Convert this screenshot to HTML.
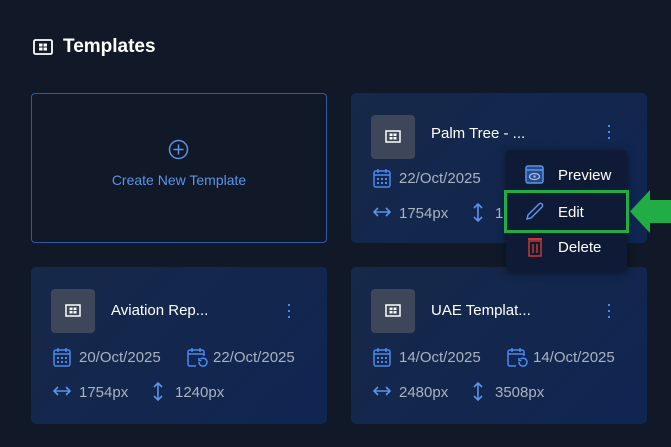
<!DOCTYPE html>
<html><head><style>
*{margin:0;padding:0;box-sizing:border-box}
body{width:671px;height:447px;background:#111827;font-family:"Liberation Sans",sans-serif;position:relative;overflow:hidden;color:#fff}
.abs{position:absolute}
.card{position:absolute;width:296px;border-radius:5px;background:linear-gradient(135deg,#172848,#0f2552)}
.thumb{position:absolute;left:20px;top:22px;width:44px;height:44px;border-radius:4px;background:#3e475a}
.title{position:absolute;left:80px;top:35px;font-size:15px;color:#fff}
.dots{position:absolute;left:257px;top:34px;width:4px}
.dots i{display:block;width:2px;height:2px;background:#4b8af0;margin:0 0 4px 0}
.t{position:absolute;font-size:15px;color:#aab2c0}
</style></head><body>
<svg class="abs" style="left:33px;top:39px" width="20" height="16" viewBox="0 0 20 16"><rect x="1" y="1" width="18" height="14" rx="1.5" fill="none" stroke="#fff" stroke-width="1.8"/><rect x="6" y="4.5" width="3.5" height="3" fill="#fff"/><rect x="10.5" y="4.5" width="3.5" height="3" fill="#fff"/><rect x="6" y="8.5" width="3.5" height="3" fill="#fff"/><rect x="10.5" y="8.5" width="3.5" height="3" fill="#fff"/></svg>
<div class="abs" style="left:63px;top:36px;font-size:19px;font-weight:bold">Templates</div>

<div class="abs" style="left:31px;top:93px;width:296px;height:150px;border:1px solid #2c5aa8;border-radius:4px"></div>
<svg class="abs" style="left:168px;top:139px" width="21" height="21"><circle cx="10.5" cy="10.5" r="9" fill="none" stroke="#5b93ea" stroke-width="1.5"/><path d="M10.5 5.5v10M5.5 10.5h10" stroke="#5b93ea" stroke-width="1.5"/></svg>
<div class="abs" style="left:31px;width:296px;top:172px;text-align:center;font-size:14px;color:#5b93ea">Create New Template</div>

<div class="card" style="left:351px;top:93px;height:150px">
 <div class="thumb"><svg style="margin:15px 0 0 14px" width="16" height="13"><rect x="1" y="1" width="14" height="11" fill="none" stroke="#fff" stroke-width="1.5"/><rect x="4.5" y="3.5" width="3" height="2.5" fill="#fff"/><rect x="8.5" y="3.5" width="3" height="2.5" fill="#fff"/><rect x="4.5" y="7" width="3" height="2.5" fill="#fff"/><rect x="8.5" y="7" width="3" height="2.5" fill="#fff"/></svg></div>
 <div class="title" style="top:32px">Palm Tree - ...</div>
 <div class="dots" style="top:32px"><i></i><i></i><i></i></div>
 <svg class="abs" style="left:22px;top:75px" width="18" height="20"><rect x="1" y="3" width="16" height="16" rx="2" fill="none" stroke="#4b8af0" stroke-width="1.5"/><path d="M1 7h16M5 1v4M13 1v4" stroke="#4b8af0" stroke-width="1.5"/><g fill="#4b8af0"><rect x="4" y="10" width="2" height="2"/><rect x="8" y="10" width="2" height="2"/><rect x="12" y="10" width="2" height="2"/><rect x="4" y="14" width="2" height="2"/><rect x="8" y="14" width="2" height="2"/><rect x="12" y="14" width="2" height="2"/></g></svg>
 <div class="t" style="left:48px;top:77px">22/Oct/2025</div>
 <svg class="abs" style="left:22px;top:114px" width="18" height="10"><path d="M1 5h16M5 1L1 5l4 4M13 1l4 4-4 4" fill="none" stroke="#5b93ea" stroke-width="1.6"/></svg>
 <svg class="abs" style="left:122px;top:110px" width="10" height="19"><path d="M5 1v17M1 5l4-4 4 4M1 14l4 4 4-4" fill="none" stroke="#5b93ea" stroke-width="1.6"/></svg>
 <div class="t" style="left:48px;top:112px">1754px</div>
 <div class="t" style="left:144px;top:112px">1</div>
</div>

<div class="card" style="left:31px;top:267px;height:157px">
 <div class="thumb"><svg style="margin:15px 0 0 14px" width="16" height="13"><rect x="1" y="1" width="14" height="11" fill="none" stroke="#fff" stroke-width="1.5"/><rect x="4.5" y="3.5" width="3" height="2.5" fill="#fff"/><rect x="8.5" y="3.5" width="3" height="2.5" fill="#fff"/><rect x="4.5" y="7" width="3" height="2.5" fill="#fff"/><rect x="8.5" y="7" width="3" height="2.5" fill="#fff"/></svg></div>
 <div class="title">Aviation Rep...</div>
 <div class="dots" style="top:37px"><i></i><i></i><i></i></div>
 <svg class="abs" style="left:22px;top:80px" width="18" height="20"><rect x="1" y="3" width="16" height="16" rx="2" fill="none" stroke="#4b8af0" stroke-width="1.5"/><path d="M1 7h16M5 1v4M13 1v4" stroke="#4b8af0" stroke-width="1.5"/><g fill="#4b8af0"><rect x="4" y="10" width="2" height="2"/><rect x="8" y="10" width="2" height="2"/><rect x="12" y="10" width="2" height="2"/><rect x="4" y="14" width="2" height="2"/><rect x="8" y="14" width="2" height="2"/><rect x="12" y="14" width="2" height="2"/></g></svg>
 <div class="t" style="left:48px;top:82px">20/Oct/2025</div>
 <svg class="abs" style="left:156px;top:80px" width="22" height="22"><path d="M9 19H3a2 2 0 0 1-2-2V5a2 2 0 0 1 2-2h12a2 2 0 0 1 2 2v4M1 7h16M5 1v4M13 1v4" fill="none" stroke="#4b8af0" stroke-width="1.5"/><path d="M12 15a4 4 0 1 0 1.5-3M12 11v2.5h2.5" fill="none" stroke="#4b8af0" stroke-width="1.5"/></svg>
 <div class="t" style="left:182px;top:82px">22/Oct/2025</div>
 <svg class="abs" style="left:22px;top:119px" width="18" height="10"><path d="M1 5h16M5 1L1 5l4 4M13 1l4 4-4 4" fill="none" stroke="#5b93ea" stroke-width="1.6"/></svg>
 <svg class="abs" style="left:122px;top:115px" width="10" height="19"><path d="M5 1v17M1 5l4-4 4 4M1 14l4 4 4-4" fill="none" stroke="#5b93ea" stroke-width="1.6"/></svg>
 <div class="t" style="left:48px;top:117px">1754px</div>
 <div class="t" style="left:144px;top:117px">1240px</div>
</div>

<div class="card" style="left:351px;top:267px;height:157px">
 <div class="thumb"><svg style="margin:15px 0 0 14px" width="16" height="13"><rect x="1" y="1" width="14" height="11" fill="none" stroke="#fff" stroke-width="1.5"/><rect x="4.5" y="3.5" width="3" height="2.5" fill="#fff"/><rect x="8.5" y="3.5" width="3" height="2.5" fill="#fff"/><rect x="4.5" y="7" width="3" height="2.5" fill="#fff"/><rect x="8.5" y="7" width="3" height="2.5" fill="#fff"/></svg></div>
 <div class="title">UAE Templat...</div>
 <div class="dots" style="top:37px"><i></i><i></i><i></i></div>
 <svg class="abs" style="left:22px;top:80px" width="18" height="20"><rect x="1" y="3" width="16" height="16" rx="2" fill="none" stroke="#4b8af0" stroke-width="1.5"/><path d="M1 7h16M5 1v4M13 1v4" stroke="#4b8af0" stroke-width="1.5"/><g fill="#4b8af0"><rect x="4" y="10" width="2" height="2"/><rect x="8" y="10" width="2" height="2"/><rect x="12" y="10" width="2" height="2"/><rect x="4" y="14" width="2" height="2"/><rect x="8" y="14" width="2" height="2"/><rect x="12" y="14" width="2" height="2"/></g></svg>
 <div class="t" style="left:48px;top:82px">14/Oct/2025</div>
 <svg class="abs" style="left:156px;top:80px" width="22" height="22"><path d="M9 19H3a2 2 0 0 1-2-2V5a2 2 0 0 1 2-2h12a2 2 0 0 1 2 2v4M1 7h16M5 1v4M13 1v4" fill="none" stroke="#4b8af0" stroke-width="1.5"/><path d="M12 15a4 4 0 1 0 1.5-3M12 11v2.5h2.5" fill="none" stroke="#4b8af0" stroke-width="1.5"/></svg>
 <div class="t" style="left:182px;top:82px">14/Oct/2025</div>
 <svg class="abs" style="left:22px;top:119px" width="18" height="10"><path d="M1 5h16M5 1L1 5l4 4M13 1l4 4-4 4" fill="none" stroke="#5b93ea" stroke-width="1.6"/></svg>
 <svg class="abs" style="left:122px;top:115px" width="10" height="19"><path d="M5 1v17M1 5l4-4 4 4M1 14l4 4 4-4" fill="none" stroke="#5b93ea" stroke-width="1.6"/></svg>
 <div class="t" style="left:48px;top:117px">2480px</div>
 <div class="t" style="left:144px;top:117px">3508px</div>
</div>

<div class="abs" style="left:506px;top:150px;width:121px;height:121px;background:#0f1a36;border-radius:4px;box-shadow:0 2px 8px rgba(0,0,0,.5)"></div>
<svg class="abs" style="left:525px;top:165px" width="19" height="19"><rect x="1" y="1" width="17" height="17" rx="2" fill="#2a4a85" stroke="#5b93ea" stroke-width="1.5"/><path d="M1 5h17" stroke="#5b93ea" stroke-width="1.5"/><ellipse cx="9.5" cy="11.5" rx="5" ry="3" fill="none" stroke="#9fc0f5" stroke-width="1.3"/><circle cx="9.5" cy="11.5" r="1.2" fill="#9fc0f5"/></svg>
<div class="abs" style="left:558px;top:167px;font-size:15px">Preview</div>
<div class="abs" style="left:504px;top:190px;width:125px;height:43px;border:3px solid #22ac45"></div>
<svg class="abs" style="left:525px;top:202px" width="19" height="19"><path d="M2 17l1-4L14 2a2 2 0 0 1 3 3L6 16z" fill="none" stroke="#5b93ea" stroke-width="1.5"/></svg>
<div class="abs" style="left:558px;top:204px;font-size:15px">Edit</div>
<svg class="abs" style="left:630px;top:190px" width="41" height="43"><path d="M0 21.5L20 0v10h21v23H20v10z" fill="#22ac45"/></svg>
<svg class="abs" style="left:527px;top:237px" width="16" height="20"><path d="M1 2h14" stroke="#c43a2f" stroke-width="2"/><rect x="2" y="4" width="12" height="15" fill="none" stroke="#c43a2f" stroke-width="1.5"/><path d="M6 7v9M10 7v9" stroke="#c43a2f" stroke-width="1.5"/></svg>
<div class="abs" style="left:558px;top:239px;font-size:15px">Delete</div>
</body></html>
